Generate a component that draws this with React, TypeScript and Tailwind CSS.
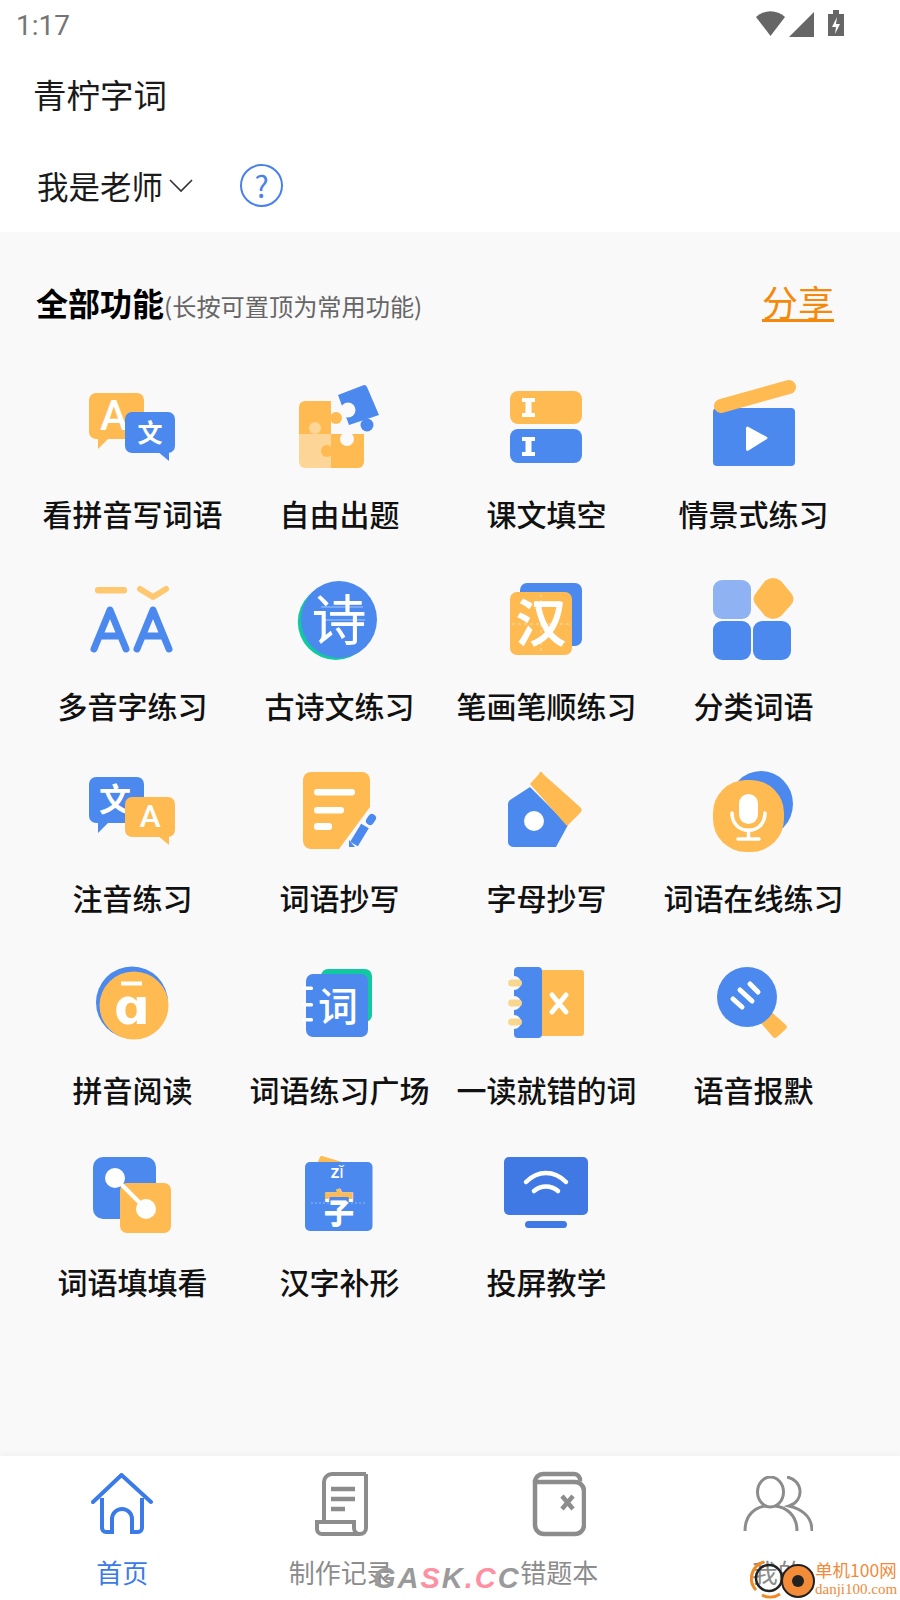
import type { ReactNode } from "react";

const BLUE = "#4c89ee";
const ORANGE = "#ffbb52";
const CJK = "'Noto Sans CJK SC', sans-serif";

// speech bubble with a small tail, used for the two translate icons
function Bubble(props: { x: number; y: number; w: number; h: number; fill: string; tail: "left" | "right" }) {
    const { x, y, w, h, fill, tail } = props;
    const pts =
        tail === "left"
            ? `${x + 9},${y + h - 2} ${x + 9},${y + h + 10} ${x + 21},${y + h - 2}`
            : `${x + w - 18},${y + h - 2} ${x + w - 6},${y + h + 8} ${x + w - 6},${y + h - 2}`;
    return (
        <g>
            <rect x={x} y={y} width={w} height={h} rx={7} fill={fill} />
            <polygon points={pts} fill={fill} />
        </g>
    );
}

function Glyph(props: { x: number; y: number; size: number; children: string; fill?: string; weight?: number; font?: string }) {
    return (
        <text
            x={props.x}
            y={props.y}
            fontSize={props.size}
            fontWeight={props.weight ?? 700}
            fill={props.fill ?? "#fff"}
            textAnchor="middle"
            fontFamily={props.font ?? CJK}
        >
            {props.children}
        </text>
    );
}

const icons: Record<string, ReactNode> = {
    kanpinyin: (
        <>
            <Bubble x={7} y={17} w={55} h={46} fill={ORANGE} tail="left" />
            <Glyph x={32} y={54} size={42} weight={500} font="Roboto, sans-serif">A</Glyph>
            <Bubble x={43} y={36} w={50} h={41} fill={BLUE} tail="right" />
            <Glyph x={68} y={66} size={25}>文</Glyph>
        </>
    ),
    puzzle: (
        <>
            <path d="M10 31a6 6 0 0 1 6-6h26v33H10z" fill={ORANGE} />
            <path d="M10 58h32v34H16a6 6 0 0 1-6-6z" fill="#fdd596" />
            <path d="M42 58h33v28a6 6 0 0 1-6 6H42z" fill={ORANGE} />
            <circle cx="47" cy="42" r="6" fill={ORANGE} />
            <circle cx="26" cy="52" r="6" fill="#fdd596" />
            <circle cx="58" cy="63" r="7" fill="#fafafa" />
            <circle cx="38" cy="75" r="6" fill={ORANGE} />
            <path d="M49 19L75 9a3 3 0 0 1 3 2l12 28-30 10z" fill={BLUE} />
            <circle cx="59" cy="34" r="7.500" fill="#fafafa" />
            <circle cx="78" cy="49" r="6.500" fill={BLUE} />
        </>
    ),
    kewen: (
        <>
            <rect x={14} y={15} width={72} height={33} rx={8} fill={ORANGE} />
            <rect x={14} y={53} width={72} height={34} rx={8} fill={BLUE} />
            <path d="M26 22h13v4h-3.500v11H39v4H26v-4h3.500V26H26zM26 61h13v4h-3.500v11H39v4H26v-4h3.500V65H26z" fill="#fff" />
        </>
    ),
    scene: (
        <>
            <rect x={10} y={32} width={82} height={58} rx={4} fill={BLUE} />
            <path d="M18 30L86 11" stroke={ORANGE} strokeWidth={14} strokeLinecap="round" />
            <path d="M43 52a1.500 1.500 0 0 1 2.500-1L64 61a1.500 1.500 0 0 1 0 2L45.500 74.500a1.500 1.500 0 0 1-2.500-1z" fill="#fff" />
        </>
    ),
    duoyin: (
        <>
            <rect x={13} y={19} width={32} height={6.500} rx={3} fill="#ffc76e" />
            <path d="M58 21l13 8 13-8" stroke="#ffc76e" strokeWidth={6} strokeLinecap="round" strokeLinejoin="round" fill="none" />
            <path d="M12 81L28 42l16 39M19 68h18M55 81L71 42l16 39M62 68h18" stroke={BLUE} strokeWidth={7} strokeLinecap="round" strokeLinejoin="round" fill="none" />
        </>
    ),
    poem: (
        <>
            <ellipse cx="46.800" cy="54" rx="38" ry="38" fill="#10c9a0" />
            <ellipse cx="50" cy="51.500" rx="38" ry="38.500" fill={BLUE} />
            <path d="M32 39h42M34 52h42" stroke="#a8c6f7" strokeWidth={1} />
            <Glyph x={50} y={72} size={55} weight={400}>诗</Glyph>
        </>
    ),
    stroke: (
        <>
            <rect x={24} y={15} width={62} height={63} rx={7} fill={BLUE} />
            <rect x={14} y={24} width={62} height={63} rx={7} fill={ORANGE} />
            <path d="M45 26v60M16 56h58" stroke="#fff" strokeOpacity={0.5} strokeWidth={1} strokeDasharray="3 3" />
            <Glyph x={45} y={74} size={51}>汉</Glyph>
        </>
    ),
    category: (
        <>
            <rect x={10} y={12} width={38} height={39} rx={9} fill="#8fb3f2" />
            <rect x={10} y={53} width={38} height={39} rx={9} fill={BLUE} />
            <rect x={50} y={53} width={38} height={39} rx={9} fill={BLUE} />
            <path d="M62 13Q70 7 78 13L88 25Q93 31 88 37L78 48Q70 54 62 48L53 37Q48 31 53 25Z" fill={ORANGE} />
        </>
    ),
    zhuyin: (
        <>
            <Bubble x={7} y={17} w={55} h={46} fill={BLUE} tail="left" />
            <Glyph x={33} y={51} size={32}>文</Glyph>
            <Bubble x={43} y={37} w={50} h={40} fill={ORANGE} tail="right" />
            <Glyph x={68} y={67} size={32} weight={500} font="Roboto, sans-serif">A</Glyph>
        </>
    ),
    copyword: (
        <>
            <path d="M14 20a8 8 0 0 1 8-8h51a8 8 0 0 1 8 8v27L50 89H22a8 8 0 0 1-8-8z" fill={ORANGE} />
            <rect x={25} y={29} width={41} height={6.500} rx={3} fill="#fff" />
            <rect x={25} y={47} width={30} height={6.500} rx={3} fill="#fff" />
            <rect x={25} y={63} width={18} height={7} rx={3} fill="#fff" />
            <path d="M65 84l11-18" stroke={BLUE} strokeWidth={9} />
            <path d="M81 61l2-3" stroke={BLUE} strokeWidth={8} strokeLinecap="round" />
            <path d="M60 87v-7l6 7z" fill={BLUE} />
        </>
    ),
    copyletter: (
        <>
            <path d="M34 27l38 38-12 22H17a5 5 0 0 1-5-5V44a5 5 0 0 1 2-4z" fill={BLUE} />
            <path d="M34 24l9-10a2 2 0 0 1 4 0l37 33a4 4 0 0 1 1 5L71 66z" fill={ORANGE} />
            <ellipse cx="38" cy="61" rx="10" ry="10" fill="#fff" />
        </>
    ),
    online: (
        <>
            <ellipse cx="58" cy="44" rx="32" ry="33" fill={BLUE} />
            <rect x={10} y={20} width={71} height={72} rx={33} fill={ORANGE} />
            <rect x={36} y={34} width={19} height={30} rx={9.500} fill="#fff" />
            <path d="M29 53c0 23 33 23 33 0" stroke="#fff" strokeWidth={3.500} fill="none" strokeLinecap="round" />
            <path d="M45.500 70v8M35 79h21" stroke="#fff" strokeWidth={3.500} strokeLinecap="round" />
        </>
    ),
    pinyinread: (
        <>
            <ellipse cx="50" cy="50.500" rx="36" ry="36" fill={BLUE} />
            <ellipse cx="52" cy="53.500" rx="34.500" ry="34" fill={ORANGE} />
            <rect x={39} y={29.500} width={21} height={4} fill="#fff" />
            <Glyph x={50} y={72} size={50} weight={700} font="'DejaVu Sans', sans-serif">ɑ</Glyph>
        </>
    ),
    square: (
        <>
            <rect x={32} y={17} width={51} height={53} rx={7} fill="#10c9a0" />
            <rect x={17} y={22} width={62} height={63} rx={7} fill={BLUE} />
            <rect x={13} y={34.500} width={11} height={3.500} rx={1.500} fill="#fff" />
            <rect x={13} y={51} width={11} height={3.500} rx={1.500} fill="#fff" />
            <rect x={13} y={66} width={11} height={3.500} rx={1.500} fill="#fff" />
            <Glyph x={49} y={69} size={40} weight={500}>词</Glyph>
        </>
    ),
    wrongbook: (
        <>
            <rect x={40} y={18} width={48} height={66} rx={3} fill={ORANGE} />
            <rect x={18} y={15} width={28} height={71} rx={4} fill={BLUE} />
            <circle cx="18" cy="31" r="7" fill="#fafafa" />
            <circle cx="18" cy="51" r="7" fill="#fafafa" />
            <circle cx="18" cy="70" r="7" fill="#fafafa" />
            <rect x={12} y={27.500} width={14} height={7} rx={3.500} fill="#f7d68f" />
            <rect x={12} y={47.500} width={14} height={7} rx={3.500} fill="#f7d68f" />
            <rect x={12} y={66.500} width={14} height={7} rx={3.500} fill="#f7d68f" />
            <path d="M56 43l14 17M70 43L56 60" stroke="#fff" strokeWidth={5} strokeLinecap="round" />
        </>
    ),
    voice: (
        <>
            <path d="M64 56l19 17a3 3 0 0 1 0 4L74 85a3 3 0 0 1-4 0L57 70z" fill={ORANGE} />
            <circle cx="44" cy="45" r="30" fill={BLUE} />
            <path d="M30 47l9 8M37 38l12 11M47 32l8 8" stroke="#fff" strokeWidth={5} strokeLinecap="round" />
        </>
    ),
    fill: (
        <>
            <rect x={11} y={13} width={63} height={62} rx={10} fill={BLUE} />
            <rect x={38} y={39} width={51} height={50} rx={7} fill={ORANGE} />
            <path d="M33 34l31 31" stroke="#fff" strokeWidth={4} />
            <circle cx="33" cy="34" r="10" fill="#fff" />
            <circle cx="64" cy="65" r="10" fill="#fff" />
        </>
    ),
    hanzi: (
        <>
            <defs>
                <clipPath id="zitop">
                    <rect x={20} y={40} width={60} height={15} />
                </clipPath>
            </defs>
            <path d="M28 20l3-7a2 2 0 0 1 2-1l20 6v4z" fill={ORANGE} />
            <rect x={16} y={18} width={67.500} height={69} rx={5} fill={BLUE} />
            <Glyph x={48} y={34} size={18} weight={500} font="Roboto, sans-serif">zǐ</Glyph>
            <path d="M22 59h56" stroke="#fff" strokeOpacity={0.4} strokeWidth={1} strokeDasharray="2 2" />
            <g transform="translate(50 0) scale(0.8 1)">
                <Glyph x={0} y={79} size={40}>字</Glyph>
            </g>
            <g clipPath="url(#zitop)">
                <g transform="translate(50 0) scale(0.8 1)">
                    <Glyph x={0} y={79} size={40} fill={ORANGE}>字</Glyph>
                </g>
            </g>
        </>
    ),
    cast: (
        <>
            <rect x={8} y={13} width={84} height={58} rx={5} fill="#4079e4" />
            <rect x={29} y={77} width={42} height={7} rx={3.500} fill="#4079e4" />
            <path d="M30 38c12-12 28-12 40 0M38 47c7-6 17-6 24 0" stroke="#fff" strokeWidth={4.500} strokeLinecap="round" fill="none" />
        </>
    ),
};

const features: { name: string; icon: string }[] = [
    { name: "看拼音写词语", icon: "kanpinyin" },
    { name: "自由出题", icon: "puzzle" },
    { name: "课文填空", icon: "kewen" },
    { name: "情景式练习", icon: "scene" },
    { name: "多音字练习", icon: "duoyin" },
    { name: "古诗文练习", icon: "poem" },
    { name: "笔画笔顺练习", icon: "stroke" },
    { name: "分类词语", icon: "category" },
    { name: "注音练习", icon: "zhuyin" },
    { name: "词语抄写", icon: "copyword" },
    { name: "字母抄写", icon: "copyletter" },
    { name: "词语在线练习", icon: "online" },
    { name: "拼音阅读", icon: "pinyinread" },
    { name: "词语练习广场", icon: "square" },
    { name: "一读就错的词", icon: "wrongbook" },
    { name: "语音报默", icon: "voice" },
    { name: "词语填填看", icon: "fill" },
    { name: "汉字补形", icon: "hanzi" },
    { name: "投屏教学", icon: "cast" },
];

function StatusBar() {
    return (
        <div className="h-[50px] flex items-start justify-between pl-4 pr-[56px]">
            <span className="mt-[5px] text-[28px] leading-[42px] text-[#757575] font-['Roboto',sans-serif]">1:17</span>
            <svg width="88" height="28" viewBox="0 0 88 28" className="mt-[10px]">
                <path d="M0 7a21 21 0 0 1 29 0L14.500 26z" fill="#666" />
                <path d="M33 27L58 2v25z" fill="#666" />
                <path d="M72 4h5V0h6v4h5v22H72z" fill="#666" />
                <path d="M81 7l-5 10h4l-1 7 5-10h-4z" fill="#fff" />
            </svg>
        </div>
    );
}

function NavItem(props: { label: string; active?: boolean; children: ReactNode }) {
    return (
        <div className="flex flex-col items-center">
            <div className="h-[80px] mt-[8px] flex items-center justify-center">{props.children}</div>
            <span className={`text-[26px] leading-[36px] mt-[10px] ${props.active ? "text-[#3b7be8]" : "text-[#8c8c8c]"}`}>
                {props.label}
            </span>
        </div>
    );
}

export default function App() {
    return (
        <div className="w-[900px] h-[1600px] flex flex-col bg-white relative overflow-hidden font-['Noto_Sans_CJK_SC',sans-serif]">
            <header className="h-[232px] shrink-0 bg-white">
                <StatusBar />
                <div className="h-[88px] flex items-center pl-[33px] text-[33.500px] text-[#1a1a1a]">青柠字词</div>
                <div className="h-[94px] pt-[2px] flex items-center pl-[37px]">
                    <span className="text-[31.500px] text-[#1a1a1a]">我是老师</span>
                    <svg width="26" height="16" viewBox="0 0 26 16" className="ml-[5px]">
                        <path d="M2 2l11 11L24 2" stroke="#333" strokeWidth="1.600" fill="none" />
                    </svg>
                    <div className="ml-[46px] mb-[2px] w-[43px] h-[43px] rounded-full border-2 border-[#4a80ea] flex items-center justify-center text-[30px] leading-none text-[#4a80ea]">
                        ?
                    </div>
                </div>
            </header>

            <main className="flex-1 bg-[#f9f9f9] pt-[45px]">
                <div className="h-[50px] flex items-center pl-[36px] pr-[66px]">
                    <span className="text-[32px] font-bold text-black">全部功能</span>
                    <span className="mt-[8px] text-[24.200px] text-[#666]">(长按可置顶为常用功能)</span>
                    <span className="ml-auto mb-[2px] text-[36px] leading-[46px] text-[#f5890b] underline underline-offset-[2px]">分享</span>
                </div>
                <div className="grid grid-cols-4 pl-[28px] pr-[44px] mt-[49px]">
                    {features.map((f) => (
                        <div key={f.name} className="h-[192px] flex flex-col items-center">
                            <svg width="100" height="100" viewBox="0 0 100 100">
                                {icons[f.icon]}
                            </svg>
                            <span className="mt-[17px] ml-[2px] text-[30px] leading-[40px] font-medium text-[#111] whitespace-nowrap">
                                {f.name}
                            </span>
                        </div>
                    ))}
                </div>
            </main>

            <nav className="h-[144px] shrink-0 bg-white grid grid-cols-4 px-[13px] shadow-[0_-2px_8px_rgba(0,0,0,0.04)]">
                <NavItem label="首页" active>
                    <svg width="62" height="62" viewBox="0 0 62 62">
                        <path d="M2 29L30.500 2 60 29" stroke="#3b7be8" strokeWidth="4" fill="none" strokeLinecap="round" strokeLinejoin="round" />
                        <path d="M11 25v30a4 4 0 0 0 4 4h6V46a10 10 0 0 1 20 0v13h6a4 4 0 0 0 4-4V25" stroke="#3b7be8" strokeWidth="4" fill="none" />
                    </svg>
                </NavItem>
                <NavItem label="制作记录">
                    <svg width="54" height="64" viewBox="0 0 54 64" fill="none" stroke="#8c8c8c" strokeWidth="4">
                        <path d="M52 2H18a8 8 0 0 0-8 8v38M52 2v54a6 6 0 0 1-12 0v-6H3v7a5 5 0 0 0 5 5h37" />
                        <path d="M17 17h24M17 27h24M17 37h14" strokeWidth="4.500" />
                    </svg>
                </NavItem>
                <NavItem label="错题本">
                    <svg width="54" height="66" viewBox="0 0 54 66" fill="none" stroke="#8c8c8c" strokeWidth="4.500">
                        <path d="M3 11a8 8 0 0 1 8-8h31a6 6 0 0 1 6 7" />
                        <path d="M3 11v43a9 9 0 0 0 9 9h31a9 9 0 0 0 9-9V20a9 9 0 0 0-9-9z" />
                        <path d="M30 25l11 13M41 25L30 38" />
                    </svg>
                </NavItem>
                <NavItem label="我的">
                    <svg width="70" height="56" viewBox="0 0 70 56" fill="none" stroke="#8c8c8c" strokeWidth="3">
                        <ellipse cx="27.500" cy="16" rx="13" ry="15" />
                        <path d="M2 55c0-16 10-24 21-25M32 30c11 1 22 9 22 25" />
                        <path d="M44 1c16 3 18 24 2 29 13 3 23 11 23 25" />
                    </svg>
                </NavItem>
            </nav>

            {/* watermarks on top of the tab labels */}
            <div className="absolute left-[373px] top-[1561px] text-[29px] leading-[34px] font-bold italic tracking-[2px] text-[#9a9a9a] font-['Liberation_Sans',sans-serif]">
                <span>GA</span>
                <span className="text-[#ff8fa3]">S</span>
                <span>K</span>
                <span className="text-[#ff8fa3]">.C</span>
                <span>C</span>
            </div>
            <div className="absolute left-[750px] top-[1556px] w-[150px] h-[44px] flex items-start">
                <svg width="66" height="44" viewBox="0 0 66 44" className="shrink-0">
                    <path d="M6 34A17 17 0 0 1 14 6M30 38A17 17 0 0 1 12 39" fill="none" stroke="#f08a24" strokeWidth="3" />
                    <circle cx="19" cy="22" r="13" fill="none" stroke="#222" strokeWidth="2.500" />
                    <circle cx="48" cy="25" r="16" fill="#f28c38" stroke="#222" strokeWidth="2" />
                    <circle cx="48" cy="25" r="6" fill="#222" />
                </svg>
                <div className="flex flex-col -ml-[1px] text-[#f08a3c] font-['Liberation_Serif',serif] leading-none">
                    <span className="text-[17.500px] mt-[5px] font-['Noto_Sans_CJK_SC',sans-serif]">单机100网</span>
                    <span className="text-[15px] mt-[3px]">danji100.com</span>
                </div>
            </div>
        </div>
    );
}
